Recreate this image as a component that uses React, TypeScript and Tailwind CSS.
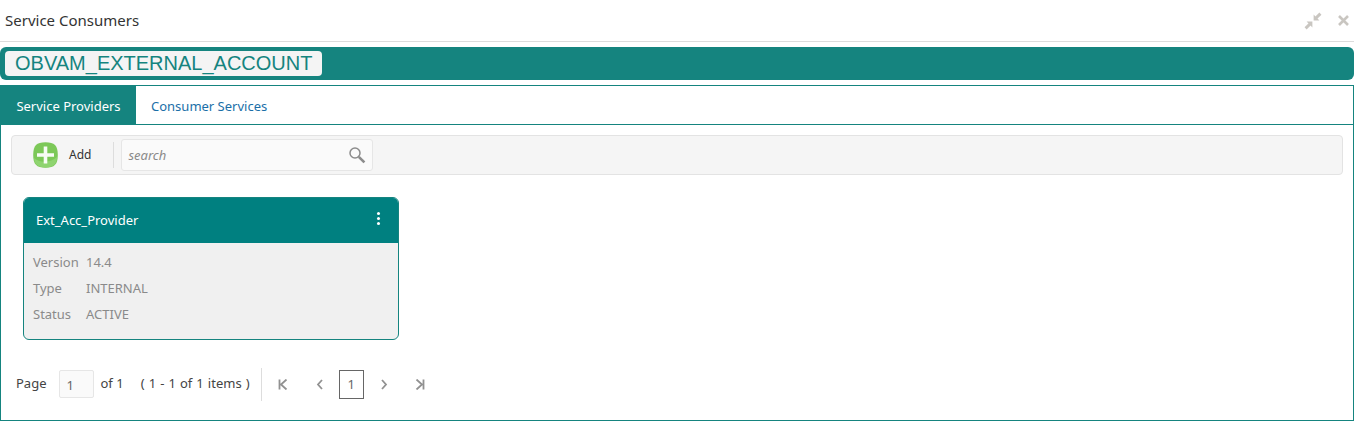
const ShrinkIcon = () => (
    <svg width="18" height="18" viewBox="0 0 18 18" fill="#c9c6c1">
        <path d="M9.6 8.4V2.6L15.4 8.4Z" />
        <path d="M16.4 1.6L12 6" stroke="#c9c6c1" strokeWidth="3" />
        <path d="M8.4 9.6V15.4L2.6 9.6Z" />
        <path d="M1.6 16.4L6 12" stroke="#c9c6c1" strokeWidth="3" />
    </svg>
);

const CloseIcon = () => (
    <svg width="11" height="11" viewBox="0 0 11 11" fill="none" stroke="#c9c6c1" strokeWidth="2.6">
        <path d="M1 1L10 10M10 1L1 10" />
    </svg>
);

const AddIcon = () => (
    <svg width="25" height="26" viewBox="0 0 25 26">
        <path d="M12.5 .3C21.5 .3 24.8 3.6 24.8 13S21.5 25.7 12.5 25.7.2 22.4.2 13 3.5 .3 12.5 .3Z" fill="#7cc858" />
        <path d="M1 16C6 21 18 21 24 15C24 22 20 25.5 12.5 25.5S1.4 22 1 16Z" fill="#8fd470" />
        <path d="M10.7 4.5h3.6v6.7H21v3.6h-6.7v6.7h-3.6v-6.7H4v-3.6h6.7Z" fill="#fff" fillOpacity=".95" />
    </svg>
);

const SearchIcon = () => (
    <svg width="18" height="18" viewBox="0 0 18 18" fill="none">
        <circle cx="7" cy="7" r="5" stroke="#8c8c8c" strokeWidth="1.5" />
        <path d="M10.8 10.8 L16.4 16.4" stroke="#8c8c8c" strokeWidth="2.6" />
    </svg>
);

const PagerIcon = ({ d }: { d: string }) => (
    <svg width="10" height="11" viewBox="0 0 10 11" fill="none" stroke="#919191" strokeWidth="1.8">
        <path d={d} />
    </svg>
);

const rows = [
    { label: 'Version', value: '14.4' },
    { label: 'Type', value: 'INTERNAL' },
    { label: 'Status', value: 'ACTIVE' },
];

const App = () => {
    return (
        <div className='w-[1354px] h-[425px] overflow-hidden bg-white font-["Noto_Sans",sans-serif]'>
            {/* Title */}
            <div className="h-[42px] flex items-center justify-between border-b border-[#dcdcdc] pl-[5px] pr-[5px]">
                <span className="text-[15px] text-[#333]">Service Consumers</span>
                <div className="flex items-center gap-[16px]">
                    <ShrinkIcon />
                    <CloseIcon />
                </div>
            </div>

            {/* Name bar */}
            <div className="mt-[5px] h-[33px] rounded-[6px] bg-[#15847f] pl-[5px] pt-[4px]">
                <div className='w-[317px] h-[25px] rounded-[4px] bg-[#f4f4f4] pl-[10px] font-["Liberation_Sans",sans-serif] text-[20px] leading-[24px] text-[#15847f]'>
                    OBVAM_EXTERNAL_ACCOUNT
                </div>
            </div>

            {/* Panel */}
            <div className="mt-[5px] h-[336px] border border-[#15847f]">
                <div className="h-[39px] flex border-b border-[#15847f]">
                    <div className="w-[135px] flex items-center justify-center bg-[#15847f] pt-[3px] text-[13px] text-white">Service Providers</div>
                    <div className="ml-[15px] flex items-center pt-[3px] text-[13px] text-[#1a6fa8]">Consumer Services</div>
                </div>

                {/* Toolbar */}
                <div className="mx-[10px] mt-[10px] h-[40px] flex items-center rounded-[4px] border border-[#e3e3e3] bg-[#f5f5f5]">
                    <div className="ml-[21px] flex">
                        <AddIcon />
                    </div>
                    <span className="ml-[11px] text-[12px] text-[#333]">Add</span>
                    <div className="ml-[22px] h-[26px] w-px bg-[#dddddd]" />
                    <div className="ml-[7px] w-[252px] h-[32px] flex items-center justify-between rounded-[3px] border border-[#e6e6e6] bg-[#fafafa] pl-[6px] pr-[6px]">
                        <span className="pt-[2px] text-[13px] italic text-[#8a8a8a]">search</span>
                        <SearchIcon />
                    </div>
                </div>

                {/* Card */}
                <div className="ml-[22px] mt-[22px] w-[376px] h-[143px] overflow-hidden rounded-[6px] border border-[#15847f] bg-[#f0f0f0]">
                    <div className="h-[45px] flex items-center justify-between bg-[#008080] pl-[12px] pr-[18px]">
                        <span className="text-[13px] text-white">Ext_Acc_Provider</span>
                        <div className="mb-[4px] flex flex-col gap-[2px]">
                            <span className="size-[3px] rounded-full bg-white" />
                            <span className="size-[3px] rounded-full bg-white" />
                            <span className="size-[3px] rounded-full bg-white" />
                        </div>
                    </div>
                    <div className="pl-[9px] pt-[7px]">
                        {rows.map((row) => (
                            <div key={row.label} className="h-[26px] flex items-center text-[13px] text-[#8a8a8a]">
                                <span className="w-[53px]">{row.label}</span>
                                <span>{row.value}</span>
                            </div>
                        ))}
                    </div>
                </div>

                {/* Pagination */}
                <div className="ml-[15px] mt-[27px] h-[34px] flex items-center text-[13px] text-[#444]">
                    <span>Page</span>
                    <div className="ml-[12px] w-[35px] h-[28px] flex items-center rounded-[2px] border border-[#e6e6e6] bg-[#fafafa] pl-[7px] pt-[3px] text-[#666]">1</div>
                    <span className="ml-[7px]">of 1</span>
                    <span className="ml-[17px] [word-spacing:0.7px]">( 1 - 1 of 1 items )</span>
                    <div className="ml-[11px] h-[33px] w-px bg-[#dddddd]" />
                    <div className="ml-[16px] flex items-center">
                        <PagerIcon d="M1.5 0.5V10.5M8.5 0.5L3 5.5L8.5 10.5" />
                        <div className="ml-[27px] flex">
                            <PagerIcon d="M7 1L3 5.5L7 10" />
                        </div>
                        <div className="ml-[14px] w-[25px] h-[29px] flex items-center justify-center border border-[#666] pt-[2px] text-[#666]">1</div>
                        <div className="ml-[15px] flex">
                            <PagerIcon d="M3 1L7 5.5L3 10" />
                        </div>
                        <div className="ml-[26px] flex">
                            <PagerIcon d="M8.5 0.5V10.5M1.5 0.5L7 5.5L1.5 10.5" />
                        </div>
                    </div>
                </div>
            </div>
        </div>
    );
};

export default App;
